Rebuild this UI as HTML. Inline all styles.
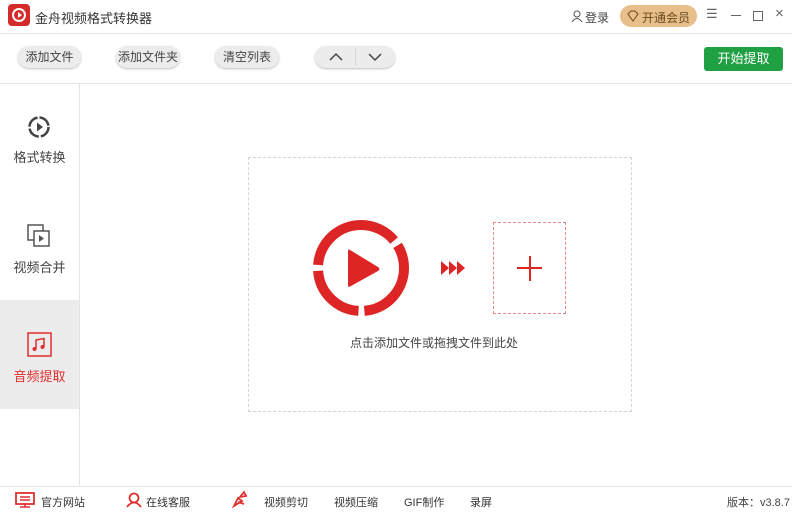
<!DOCTYPE html>
<html><head><meta charset="utf-8"><style>
*{margin:0;padding:0;box-sizing:border-box}
body{width:792px;height:515px;background:#fff;font-family:"Liberation Sans","Noto Sans CJK SC",sans-serif;position:relative;overflow:hidden;color:#333}
.a{position:absolute}
.btn{position:absolute;top:46px;height:22px;border-radius:11px;background:#ececec;box-shadow:0 1px 2px rgba(0,0,0,.25);font-size:12px;color:#444;text-align:center;line-height:22px}
.side{font-size:13px;color:#444;text-align:center;width:79px}
.ft{position:absolute;top:494px;font-size:11px;color:#333}
</style></head><body>
<div class="a" style="left:8px;top:4px;width:22px;height:22px;border-radius:4px;background:#d42a2a"></div>
<svg class="a" style="left:8px;top:4px" width="22" height="22"><circle cx="11" cy="11" r="6" fill="none" stroke="#fff" stroke-width="2"/><path d="M10 8 L14 11 L10 14Z" fill="#fff"/></svg>
<div class="a" style="left:35px;top:8px;font-size:13px;color:#333">金舟视频格式转换器</div>
<svg class="a" style="left:571px;top:10px" width="12" height="12"><circle cx="6" cy="4" r="3" fill="none" stroke="#555"/><path d="M1 12 Q6 5 11 12" fill="none" stroke="#555"/></svg>
<div class="a" style="left:585px;top:9px;font-size:12px;color:#444">登录</div>
<div class="a" style="left:620px;top:5px;width:77px;height:22px;border-radius:11px;background:#e8bf8a"></div>
<svg class="a" style="left:627px;top:10px" width="12" height="12"><path d="M1 4 L4 1 H8 L11 4 L6 11Z" fill="none" stroke="#6b4a20"/></svg>
<div class="a" style="left:642px;top:9px;font-size:12px;color:#6b4a20">开通会员</div>
<div class="a" style="left:706px;top:6px;font-size:13px;color:#666">☰</div>
<div class="a" style="left:731px;top:15px;width:10px;height:1px;background:#666"></div>
<div class="a" style="left:753px;top:11px;width:10px;height:10px;border:1px solid #666"></div>
<div class="a" style="left:775px;top:5px;font-size:15px;color:#666">×</div>
<div class="a" style="left:0;top:33px;width:792px;height:1px;background:#e4e4e4"></div>
<div class="btn" style="left:18px;width:63px">添加文件</div>
<div class="btn" style="left:116px;width:64px">添加文件夹</div>
<div class="btn" style="left:215px;width:64px">清空列表</div>
<div class="btn" style="left:315px;width:80px"></div>
<div class="a" style="left:355px;top:48px;width:1px;height:18px;background:#d8d8d8"></div>
<svg class="a" style="left:327px;top:51px" width="60" height="12"><path d="M3 9 L9 3 L15 9" fill="none" stroke="#444" stroke-width="1.5"/><path d="M42 3 L48 9 L54 3" fill="none" stroke="#444" stroke-width="1.5"/></svg>
<div class="a" style="left:704px;top:47px;width:79px;height:24px;border-radius:3px;background:#1fa043;color:#fff;font-size:13px;text-align:center;line-height:24px">开始提取</div>
<div class="a" style="left:0;top:83px;width:792px;height:1px;background:#e4e4e4"></div>
<div class="a" style="left:79px;top:84px;width:1px;height:402px;background:#e4e4e4"></div>
<div class="a" style="left:0;top:300px;width:79px;height:109px;background:#ececec"></div>
<svg class="a" style="left:27px;top:115px" width="24" height="24"><circle cx="12" cy="12" r="9.5" fill="none" stroke="#444" stroke-width="2.5" stroke-dasharray="13 2"/><path d="M10 7.5 L16 12 L10 16.5Z" fill="#444"/></svg>
<div class="a side" style="left:0;top:147px">格式转换</div>
<svg class="a" style="left:27px;top:224px" width="26" height="26"><rect x="1" y="1" width="15" height="15" fill="none" stroke="#555" stroke-width="1.5"/><rect x="7" y="7" width="15" height="15" fill="#fff" stroke="#555" stroke-width="1.5"/><path d="M12 11 L17 14.5 L12 18Z" fill="#555"/></svg>
<div class="a side" style="left:0;top:257px">视频合并</div>
<svg class="a" style="left:27px;top:332px" width="26" height="26"><rect x="1" y="1" width="23" height="23" fill="none" stroke="#e03030" stroke-width="1.5"/><path d="M9 17 V8 L17 6.5 V15" fill="none" stroke="#e03030" stroke-width="1.5"/><circle cx="7.5" cy="17" r="2" fill="#e03030"/><circle cx="15.5" cy="15" r="2" fill="#e03030"/></svg>
<div class="a side" style="left:0;top:366px;color:#e03030">音频提取</div>
<div class="a" style="left:248px;top:157px;width:384px;height:255px;border:1px dashed #d4d4d4"></div>
<svg class="a" style="left:310px;top:218px" width="104" height="104">
<circle cx="51" cy="50" r="43" fill="none" stroke="#dd2525" stroke-width="10" stroke-dasharray="64 6 62 6 102 6 24 0"/>
<path d="M40 32 Q38 30 38 34 V67 Q38 70 41 68 L68 53 Q71 51 68 49Z" fill="#dd2525"/></svg>
<svg class="a" style="left:441px;top:260px" width="26" height="16"><path d="M0 1 L8 8 L0 15Z M8 1 L16 8 L8 15Z M16 1 L24 8 L16 15Z" fill="#dd2525"/></svg>
<div class="a" style="left:493px;top:222px;width:73px;height:92px;border:1px dashed #ec8a8a"></div>
<div class="a" style="left:517px;top:267px;width:25px;height:1.5px;background:#dd2525"></div>
<div class="a" style="left:529px;top:256px;width:1.5px;height:25px;background:#dd2525"></div>
<div class="a" style="left:350px;top:334px;font-size:12px;color:#444">点击添加文件或拖拽文件到此处</div>
<div class="a" style="left:0;top:486px;width:792px;height:1px;background:#e4e4e4"></div>
<svg class="a" style="left:15px;top:492px" width="20" height="16"><rect x="1" y="1" width="18" height="11" fill="none" stroke="#e03030" stroke-width="1.8"/><path d="M5 5 H15 M5 8 H15 M10 12 V15 M5 15 H15" stroke="#e03030" stroke-width="1.5"/></svg>
<div class="ft" style="left:41px">官方网站</div>
<svg class="a" style="left:126px;top:492px" width="16" height="16"><circle cx="8" cy="6" r="4.5" fill="none" stroke="#e03030" stroke-width="1.8"/><path d="M1 15 Q8 6 15 15" fill="none" stroke="#e03030" stroke-width="1.8"/></svg>
<div class="ft" style="left:146px">在线客服</div>
<svg class="a" style="left:232px;top:490px" width="16" height="18"><path d="M2 16 L6 8 L10 11Z M8 7 L12 2 L14 6Z M6 12 L12 14" fill="none" stroke="#e03030" stroke-width="1.8"/></svg>
<div class="ft" style="left:264px">视频剪切</div>
<div class="ft" style="left:334px">视频压缩</div>
<div class="ft" style="left:404px">GIF制作</div>
<div class="ft" style="left:470px">录屏</div>
<div class="ft" style="left:727px;color:#444">版本：v3.8.7</div>
</body></html>
